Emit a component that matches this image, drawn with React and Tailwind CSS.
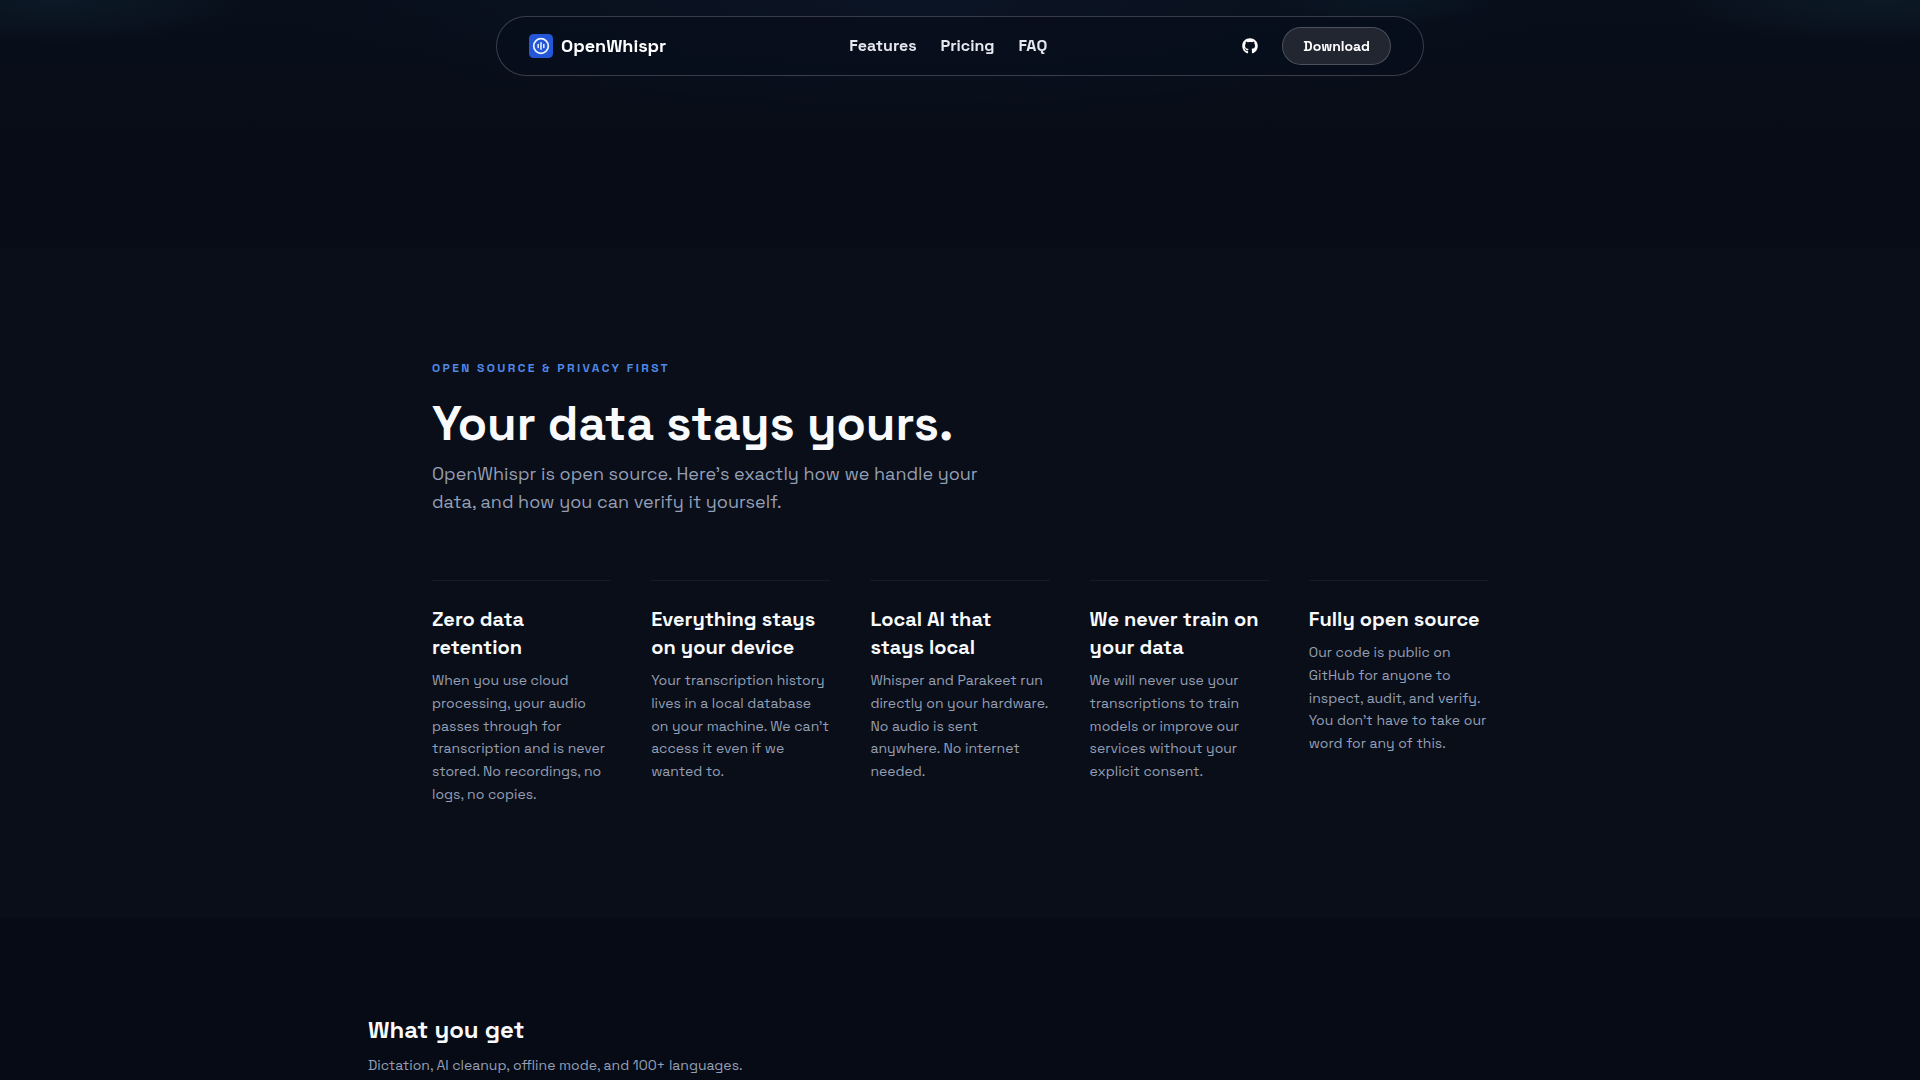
import { FaGithub } from 'react-icons/fa';

const navLinks = [
  { label: 'Features', href: '#features' },
  { label: 'Pricing', href: '#pricing' },
  { label: 'FAQ', href: '#faq' },
];

const promises = [
  {
    title: 'Zero data retention',
    body: 'When you use cloud processing, your audio passes through for transcription and is never stored. No recordings, no logs, no copies.',
  },
  {
    title: 'Everything stays on your device',
    body: 'Your transcription history lives in a local database on your machine. We can’t access it even if we wanted to.',
  },
  {
    title: 'Local AI that stays local',
    body: 'Whisper and Parakeet run directly on your hardware. No audio is sent anywhere. No internet needed.',
  },
  {
    title: 'We never train on your data',
    body: 'We will never use your transcriptions to train models or improve our services without your explicit consent.',
  },
  {
    title: 'Fully open source',
    body: 'Our code is public on GitHub for anyone to inspect, audit, and verify. You don’t have to take our word for any of this.',
  },
];

function Logo() {
  return (
    <svg viewBox="0 0 24 24" className="size-6" aria-hidden="true">
      <rect width="24" height="24" rx="4.5" fill="#2456d8" />
      <circle cx="12" cy="12" r="7.3" fill="none" stroke="#eef4ff" strokeWidth="1.7" />
      <path d="M9.2 10.6v2.8M12 8.7v6.6M14.8 10.6v2.8" stroke="#eef4ff" strokeWidth="1.5" strokeLinecap="round" />
    </svg>
  );
}

function Header() {
  return (
    <header className="fixed inset-x-0 top-4 z-10 px-6">
      <div className="mx-auto flex h-[60px] max-w-[928px] items-center justify-between rounded-full border border-white/20 bg-[#080e1b]/80 px-8">
        <a href="#top" className="flex items-center gap-2 text-lg font-bold text-white">
          <Logo />
          OpenWhispr
        </a>
        <nav className="flex items-center gap-6">
          {navLinks.map((link) => (
            <a key={link.label} href={link.href} className="text-base font-semibold text-[#e4e7ed]">
              {link.label}
            </a>
          ))}
        </nav>
        <div className="flex items-center gap-3">
          <a href="#github" aria-label="GitHub" className="p-3 text-white">
            <FaGithub className="size-4" />
          </a>
          <button
            type="button"
            className="h-[38px] rounded-full border border-white/20 bg-[#212631] px-5 text-sm font-bold text-white"
          >
            Download
          </button>
        </div>
      </div>
    </header>
  );
}

export default function App() {
  return (
    <div
      id="top"
      className="min-h-screen bg-[#070b15] antialiased font-['Space_Grotesk',Inter,sans-serif]"
    >
      <Header />

      <div className="h-62 bg-[radial-gradient(ellipse_200px_44px_at_3%_0,#0c1926,transparent),radial-gradient(ellipse_620px_130px_at_48%_0,#0b1424,transparent),radial-gradient(ellipse_220px_44px_at_98%_0,#0c1a26,transparent),radial-gradient(ellipse_110px_24px_at_72%_0,#0a1824,transparent),linear-gradient(#080f1b,#070c16_130px)]" />

      <section id="privacy" className="bg-[#0a0e18] py-28">
        <div className="mx-auto max-w-6xl px-12">
          <p className="text-xs font-semibold uppercase tracking-[0.2em] text-[#5088e6]">
            Open source &amp; privacy first
          </p>
          <h1 className="mt-6 text-5xl/none font-bold text-[#f8fafc]">Your data stays yours.</h1>
          <p className="mt-3 max-w-xl text-lg/7 text-[#949fb5]">
            OpenWhispr is open source. Here’s exactly how we handle your data, and how you can verify it yourself.
          </p>

          <div className="mt-16 grid grid-cols-5 gap-10">
            {promises.map((item) => (
              <article key={item.title} className="border-t border-[#151b26] pt-6">
                <h2 className="text-xl/7 font-bold text-[#f8fafc]">{item.title}</h2>
                <p className="mt-2 text-sm/relaxed text-[#949fb5]">{item.body}</p>
              </article>
            ))}
          </div>
        </div>
      </section>

      <section id="features" className="pt-24">
        <div className="mx-auto max-w-7xl px-12">
          <h2 className="text-2xl/8 font-bold text-[#f8fafc]">What you get</h2>
          <p className="mt-2 text-sm/relaxed text-[#949fb5]">
            Dictation, AI cleanup, offline mode, and 100+ languages.
          </p>
        </div>
      </section>
    </div>
  );
}
